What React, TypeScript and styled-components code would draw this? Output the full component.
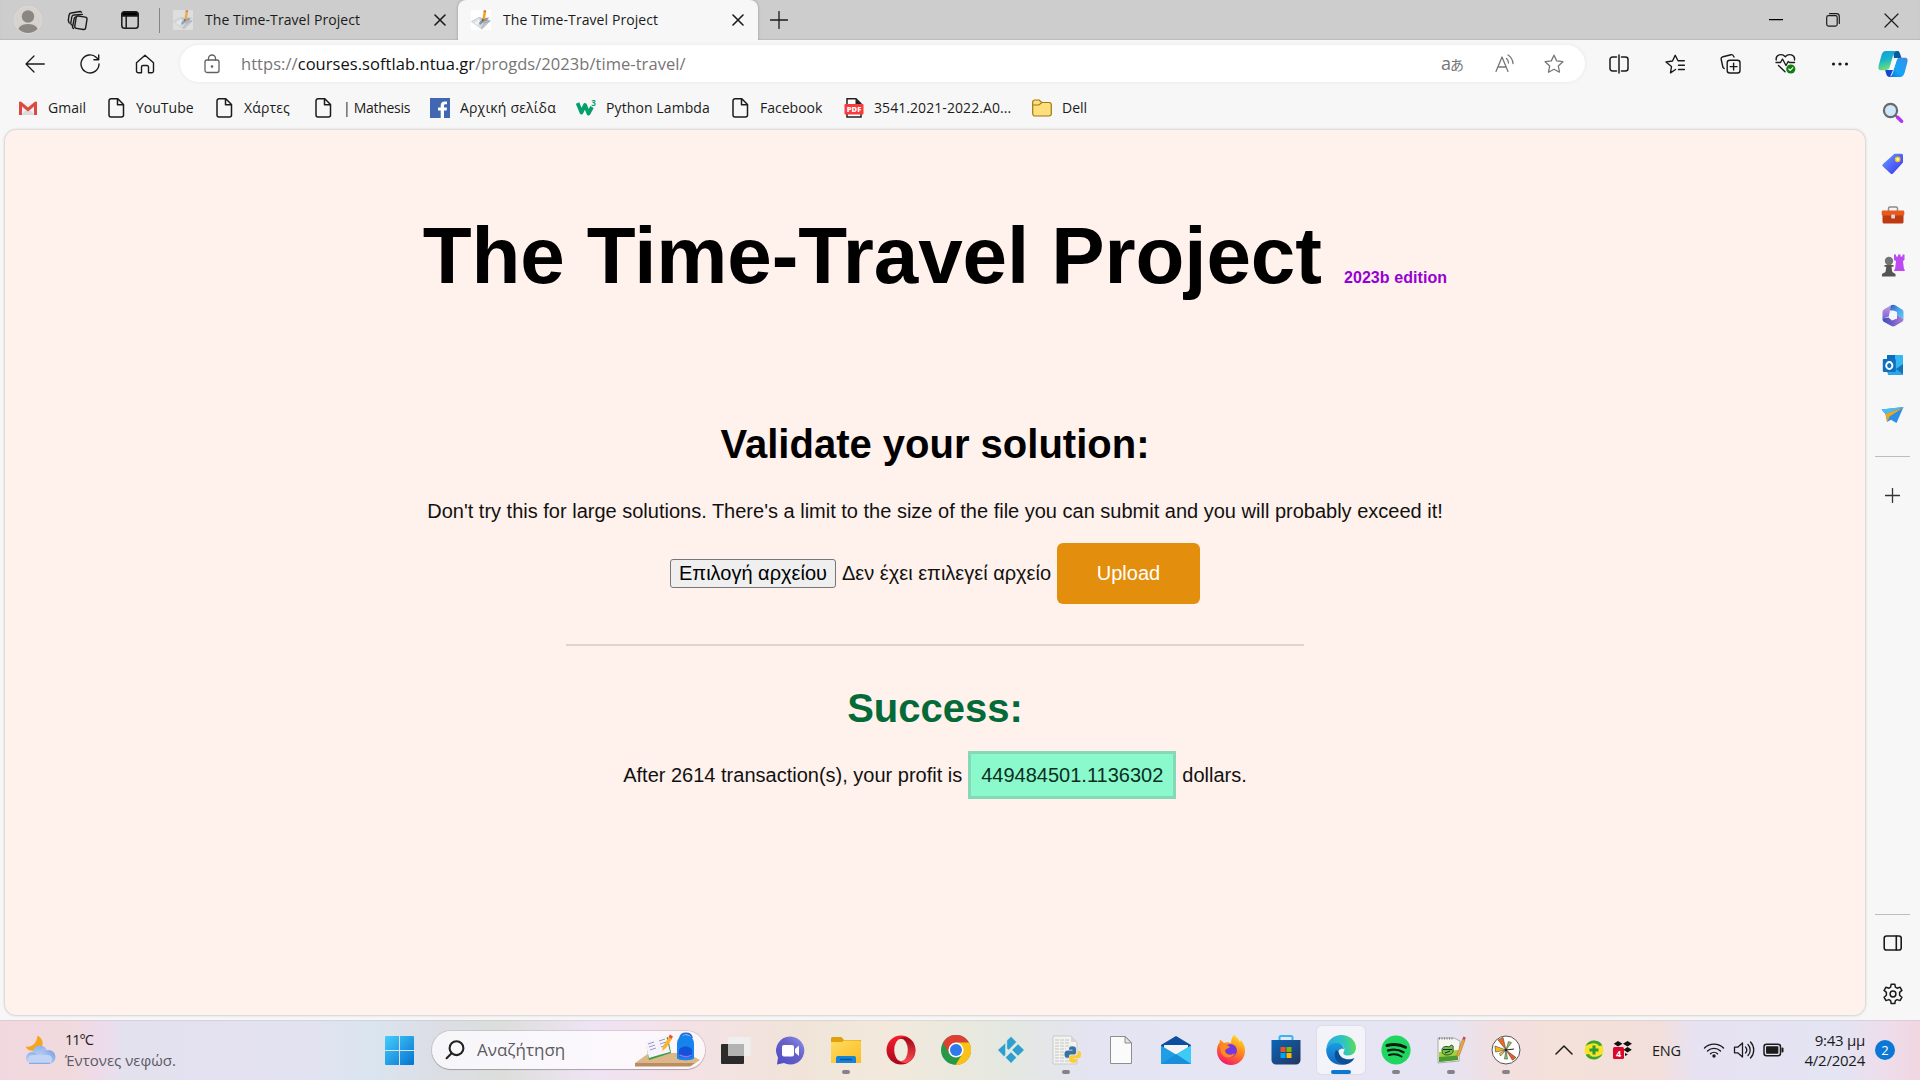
import React from 'react';
import styled, { createGlobalStyle } from 'styled-components';

const ui = `"Open Sans", "Noto Sans", sans-serif`;
const arial = `"Liberation Sans", Arial, sans-serif`;

const Global = createGlobalStyle`
  * { box-sizing: border-box; }
  html, body { margin: 0; padding: 0; overflow: hidden; }
  body { font-family: ${ui}; background: #f7f7f7; }
  svg { display: block; flex: none; }
`;

/* ---------- frame ---------- */
const Screen = styled.div`
  width: 1920px;
  height: 1080px;
  display: grid;
  grid-template-rows: 40px 980px 60px;
  background: #f7f7f7;
  overflow: hidden;
`;

const Tray = styled.div`
  display: flex;
  align-items: center;
  flex: none;
  margin-left: 22px;
`;

const IconBox = styled.span<{ $w: number; $ml?: number }>`
  flex: none;
  display: flex;
  align-items: center;
  justify-content: center;
  width: ${(p) => p.$w}px;
  margin-left: ${(p) => p.$ml ?? 0}px;
`;

/* ---------- tab strip ---------- */
const TabStrip = styled.header`
  display: flex;
  align-items: center;
  background: #cdcdcd;
  box-shadow: inset 0 -1px 1px #bcbcbc;
`;

const Avatar = styled.span`
  width: 28px;
  height: 28px;
  margin-left: 14px;
  border-radius: 50%;
  overflow: hidden;
  background: #d6d3cf;
  border: 1px solid #dedbd6;
`;

const StripDivider = styled.span`
  width: 1px;
  height: 25px;
  margin-left: 20px;
  background: #848484;
`;

const Tab = styled.div<{ $active?: boolean }>`
  display: flex;
  align-items: center;
  height: 40px;
  width: ${(p) => (p.$active ? 300 : 298)}px;
  padding-left: 13px;
  background: ${(p) => (p.$active ? '#f7f7f7' : 'transparent')};
  border-radius: 8px 8px 0 0;
  box-shadow: ${(p) => (p.$active ? '0 0 3px rgba(0,0,0,0.28)' : 'none')};
  clip-path: ${(p) => (p.$active ? 'inset(0 -4px 0 -4px)' : 'none')};
`;

const TabTitle = styled.span`
  width: 219px;
  margin-left: 12px;
  font-size: 14px;
  line-height: 20px;
  letter-spacing: 0.08px;
  color: #1b1b1b;
  white-space: nowrap;
`;

const Grow = styled.span`
  flex: 1;
`;

/* ---------- browser body ---------- */
const Body = styled.div`
  display: grid;
  grid-template-columns: 1865px 55px;
`;

const MainColumn = styled.div`
  display: grid;
  grid-template-rows: 48px 42px 885px;
  padding-left: 5px;
`;

const Toolbar = styled.nav`
  display: flex;
  align-items: center;
  padding-bottom: 1px;
`;

const AddressBar = styled.div`
  display: flex;
  align-items: center;
  width: 1405px;
  height: 37px;
  margin-left: 25px;
  border-radius: 19px;
  background: #fff;
  box-shadow: 0 0 4px rgba(0, 0, 0, 0.07);
`;

const Url = styled.span`
  width: 1200px;
  margin-left: 21px;
  font-size: 16.5px;
  line-height: 24px;
  letter-spacing: 0.05px;
  color: #767676;
  white-space: nowrap;
  b { font-weight: 400; color: #111; }
`;

const LangGlyph = styled.span`
  width: 24px;
  font: 18px/20px "Open Sans", "Noto Sans CJK JP", sans-serif;
  letter-spacing: -1px;
  color: #767676;
  white-space: nowrap;
  small { font-size: 14px; }
`;

const Bookmarks = styled.div`
  display: flex;
  align-items: center;
  padding: 0 0 3px 13px;
`;

const Bookmark = styled.a<{ $w: number; $ls?: number }>`
  display: flex;
  align-items: center;
  flex: none;
  gap: 10px;
  width: ${(p) => p.$w}px;
  font-size: 14px;
  line-height: 20px;
  letter-spacing: ${(p) => p.$ls ?? 0}px;
  color: #1b1b1b;
  white-space: nowrap;
`;

/* ---------- sidebar ---------- */
const Sidebar = styled.aside`
  display: flex;
  flex-direction: column;
  align-items: center;
`;

const SideItem = styled.span<{ $h?: number }>`
  display: flex;
  align-items: center;
  justify-content: center;
  width: 54px;
  height: ${(p) => p.$h ?? 50}px;
`;

const SideRule = styled.span`
  width: 35px;
  height: 1px;
  background: #bdbdbd;
`;

/* ---------- page ---------- */
const Page = styled.main`
  height: 885px;
  display: flex;
  flex-direction: column;
  align-items: center;
  background: #fff1ec;
  border-radius: 11px;
  box-shadow: 0 0 3px rgba(0, 0, 0, 0.3);
  font-family: ${arial};
  font-size: 20px;
  line-height: 23px;
  color: #111;
`;

const Title = styled.h1`
  margin: 80px 0 0;
  font-size: 80px;
  line-height: 92px;
  letter-spacing: -0.09px;
  color: #000;
  small { font-size: 16px; line-height: 1; letter-spacing: 0.08px; color: #9400d3; }
`;

const Heading = styled.h2<{ $top: number; $color?: string }>`
  margin: ${(p) => p.$top}px 0 0;
  font-size: 40px;
  line-height: 46px;
  color: ${(p) => p.$color ?? '#000'};
`;

const Para = styled.p`
  margin: 33px 0 0;
`;

const UploadForm = styled.form`
  display: flex;
  align-items: center;
  margin-top: 20px;
`;

const FileButton = styled.button`
  width: 166px;
  height: 29px;
  padding: 0;
  border: 1px solid #767676;
  border-radius: 3px;
  background: #efefef;
  font: 20px/23px ${arial};
  color: #000;
`;

const FileName = styled.span`
  width: 215px;
  margin-left: 6px;
  white-space: nowrap;
`;

const UploadButton = styled.button`
  width: 143px;
  height: 61px;
  border: 0;
  border-radius: 6px;
  background: #e38f0d;
  font: 20px/23px ${arial};
  color: #fff;
`;

const Rule = styled.hr`
  width: 738px;
  height: 2px;
  margin: 40px 0 0;
  border: 0;
  background: #dfd3cf;
`;

const Result = styled.div`
  display: flex;
  align-items: center;
  gap: 6px;
  margin-top: 20px;
`;

const Profit = styled.span`
  padding: 10px 10px 9px;
  border: 3px solid #86d9b8;
  background: #8afacd;
  color: #0b2e1f;
`;

/* ---------- taskbar ---------- */
const Taskbar = styled.footer`
  display: flex;
  align-items: center;
  border-top: 1px solid rgba(120, 110, 130, 0.14);
  padding-bottom: 1px;
  background: linear-gradient(90deg,
    #f1d8e0 0, #f0dadd 70px, #eedbea 98px, #e4e1ef 125px, #e3e2f0 300px,
    #dae5ef 370px, #dcdee6 430px, #dcdedb 500px, #efe4f4 595px, #f4e1e6 680px,
    #f0e4d9 800px, #f2e9dc 890px, #e4e8e1 1010px, #e4e4f2 1090px, #e6e5f4 1300px,
    #e6e4f2 1450px, #f2dfe0 1500px, #f4e1d9 1560px, #f2dfdc 1660px, #e7e2f2 1695px,
    #e4e4f3 1840px, #efdcea 1890px, #f0d7e1 1920px);
`;

const Weather = styled.div`
  width: 320px;
  margin-left: 8px;
  font-size: 15px;
  line-height: 20px;
  color: #5b5962;
  white-space: nowrap;
  strong { display: block; font-size: 14.5px; font-weight: 400; letter-spacing: -1px; color: #1a1a1a; }
`;

const SearchBox = styled.div`
  display: flex;
  align-items: center;
  width: 273px;
  height: 38px;
  margin-left: 18px;
  padding-left: 13px;
  overflow: hidden;
  border-radius: 19px;
  background: linear-gradient(90deg, #f6f6f9, #fbf8fd 55%, #fcf6f8);
  box-shadow: 0 0 0 1px rgba(90, 80, 100, 0.16), 0 1px 1px rgba(0, 0, 0, 0.22);
`;

const SearchText = styled.span`
  width: 158px;
  margin-left: 12px;
  font-size: 17px;
  line-height: 22px;
  color: #5d5b60;
`;

const Apps = styled.div`
  display: grid;
  grid-template-columns: repeat(15, 55px);
  margin-left: 3px;
`;

const AppSlot = styled.span<{ $active?: boolean }>`
  display: flex;
  position: relative;
  align-items: center;
  justify-content: center;
  justify-self: center;
  width: 48px;
  height: 48px;
  border-radius: 5px;
  background: ${(p) => (p.$active ? 'rgba(255,255,255,0.55)' : 'transparent')};
  box-shadow: ${(p) => (p.$active ? '0 0 0 1px rgba(0,0,0,0.04)' : 'none')};
`;

const Running = styled.i<{ $active?: boolean }>`
  position: absolute;
  bottom: 0;
  left: 50%;
  width: ${(p) => (p.$active ? 20 : 8)}px;
  height: 4px;
  border-radius: 2px;
  transform: translateX(-50%);
  background: ${(p) => (p.$active ? '#0a78d4' : '#858288')};
`;

const Lang = styled.span`
  width: 51px;
  margin-left: 19px;
  font-size: 14.5px;
  letter-spacing: -0.2px;
  color: #1b1b1b;
`;

const Clock = styled.div`
  width: 80px;
  font-size: 15px;
  line-height: 20px;
  letter-spacing: -0.25px;
  text-align: right;
  color: #1b1b1b;
  white-space: nowrap;
`;

const Badge = styled.span`
  display: flex;
  align-items: center;
  justify-content: center;
  width: 20px;
  height: 20px;
  margin-left: 10px;
  border-radius: 50%;
  background: #0a78d4;
  color: #fff;
  font-size: 13px;
`;

/* ---------- line icons ---------- */
type LineProps = { w: number; h: number; c?: string; s?: number; children: React.ReactNode };
const Line = ({ w, h, c = '#1b1b1b', s = 1.3, children }: LineProps) => (
  <svg width={w} height={h} viewBox={`0 0 ${w} ${h}`} fill="none" stroke={c} strokeWidth={s} strokeLinecap="round" strokeLinejoin="round">
    {children}
  </svg>
);

const Person = () => (
  <svg width="26" height="26" viewBox="0 0 26 26" fill="#8b8682">
    <circle cx="13" cy="9.500" r="6.200" />
    <path d="M2.500 26c0-6 4-9 10.500-9s10.500 3 10.500 9z" />
  </svg>
);
const Workspaces = () => (
  <Line w={22} h={21} s={1.4}>
    <rect x="8.500" y="6.500" width="11" height="12.500" rx="2" transform="rotate(9 14 12)" />
    <path d="M5.500 15.500 4.600 15a2 2 0 0 1-.8-2l1-6a2.300 2.300 0 0 1 2.200-2l8.500-.6M2.300 13l-.4-.8-.6-2 .8-5A2.300 2.300 0 0 1 4.200 3l9-1.500 1.300.6M6.500 18.500l-1-1 1.600-8.700A2 2 0 0 1 9 7" />
  </Line>
);
const TabActions = () => (
  <Line w={18} h={18} s={1.5}>
    <rect x=".8" y=".8" width="16.400" height="16.400" rx="2.800" />
    <path d="M1 3.500a2.500 2.500 0 0 1 2.500-2.500h11A2.500 2.500 0 0 1 17 3.500V5H1z" fill="#000" />
    <path d="M5.200 5v12" />
  </Line>
);
const Cross = ({ n = 10, s = 1.6 }: { n?: number; s?: number }) => (
  <Line w={n + 2} h={n + 2} s={s}>
    <path d={`M1 1 ${n + 1} ${n + 1}M${n + 1} 1 1 ${n + 1}`} />
  </Line>
);
const Plus = ({ n, c }: { n: number; c?: string }) => (
  <Line w={n} h={n} c={c} s={1.3}>
    <path d={`M${n / 2} .5V${n - 0.5}M.5 ${n / 2}H${n - 0.5}`} />
  </Line>
);
const PaperPencil = ({ faded }: { faded?: boolean }) => (
  <svg width="20" height="20" viewBox="0 0 20 20" opacity={faded ? 0.75 : 1}>
    <rect width="20" height="20" fill={faded ? '#e4e4e4' : '#fff'} />
    <path d="M0 11.500 8 7l12 3.500-9 9z" fill="#bcc1ca" />
    <path d="m.5 12 7.500-4.500 4 6-2.500 4.500z" fill="#dadfe6" />
    <path d="m3 12.500 5-3 2 3-4 2.500z" fill="#eef1f5" />
    <path d="M8 13c2-3 6-6 11-5-3 .5-3 1.500-2 2.500-3-.5-5 2-8 4.500z" fill="#8f959d" />
    <path d="M13 13c2-1 4-1 6-2" stroke="#a6abb3" fill="none" />
    <path d="m11.500 8.800 1-7L15 2l-.8 6-2.200 3z" fill="#f2a51c" />
    <path d="m12.500 1.800.2-1.600 2.500.3-.2 1.500z" fill="#d9542b" />
    <path d="m11.500 8.800-.2 2.700 1.600-1.700z" fill="#333" />
  </svg>
);

const Back = () => <Line w={20} h={18}><path d="M19.300 9H1M9 1 1 9l8 8" /></Line>;
const Reload = () => <Line w={20} h={20} s={1.4}><path d="M19 10a9 9 0 1 1-2.600-6.400L18.500 5.500M18.700 1v4.800h-4.800" /></Line>;
const Home = () => <Line w={20} h={20} s={1.4}><path d="M1.500 8.800 10 1.200l8.500 7.600V17a1.800 1.800 0 0 1-1.800 1.800h-3.200V13a1.500 1.500 0 0 0-1.500-1.500H8A1.500 1.500 0 0 0 6.500 13v5.800H3.300A1.800 1.800 0 0 1 1.500 17z" /></Line>;
const Lock = () => (
  <Line w={16} h={20} c="#616161">
    <rect x="1" y="6" width="14" height="12.500" rx="2" />
    <path d="M4.500 6V4.500a3.500 3.500 0 0 1 7 0V6" />
    <circle cx="8" cy="12.500" r=".7" fill="#616161" />
  </Line>
);
const ReadAloud = () => (
  <Line w={20} h={19} c="#767676">
    <path d="M1 17.500 7 3l6 14.500M3 13h8M11.500 4.500c1.500 1.300 2 2.800 2 4.500M13 1c3 2 4.800 5 5 8.500" />
  </Line>
);
const starPath = 'm10 1.200 2.700 5.700 6.200.8-4.600 4.300 1.200 6.200L10 15.200l-5.500 3 1.200-6.200L1.100 7.700l6.200-.8z';
const Star = () => <Line w={20} h={20} c="#767676"><path d={starPath} /></Line>;
const Split = () => <Line w={20} h={20} s={1.5}><path d="M10 1v18M7.500 3h-4A2.500 2.500 0 0 0 1 5.500v9A2.500 2.500 0 0 0 3.500 17h4M12.500 3h4A2.500 2.500 0 0 1 19 5.500v9a2.500 2.500 0 0 1-2.500 2.500h-4" /></Line>;
const Favorites = () => <Line w={20} h={20} s={1.4}><path d="M10.500 15.500 5.500 18.800 6.500 12.500 1 8l6.500-1L10.200 1.300 13 6.800h6.300M13.500 11.300h6M13.500 15.500h6" /></Line>;
const Collections = () => (
  <Line w={21} h={21} s={1.4}>
    <rect x="7.200" y="7.200" width="12.800" height="12.800" rx="2.500" />
    <path d="M13.600 10.200v6.800M10.200 13.600H17M4.200 15.500 3 14.500 1.200 6.500a2.300 2.300 0 0 1 1.800-2.800l8-2a2.300 2.300 0 0 1 2.500 1.300l.5 1" />
  </Line>
);
const Health = () => (
  <Line w={21} h={21} s={1.4}>
    <path d="M1.200 7C.5 1.500 7 0 10.300 3.700 13.500 0 20.300 1.500 19.500 7M1 9.500h4.500l2-3.500 3.500 6.500 2.200-4 1.300 1h5M3.500 12.500 10 18.800" />
    <circle cx="15.800" cy="16" r="4.600" fill="#117c10" stroke="none" />
    <path d="m13.800 16 1.400 1.400 2.700-2.800" stroke="#fff" strokeWidth="1.100" />
  </Line>
);
const Dots = () => <svg width="18" height="4" fill="#1b1b1b"><circle cx="2.500" cy="2" r="1.600" /><circle cx="9" cy="2" r="1.600" /><circle cx="15.500" cy="2" r="1.600" /></svg>;
const Copilot = () => (
  <svg width="30" height="28" viewBox="0 0 30 28">
    <defs>
      <linearGradient id="cpA" x1="0" y1="0" x2="0.300" y2="1"><stop offset="0" stopColor="#0f9ee0" /><stop offset=".5" stopColor="#19b3c9" /><stop offset="1" stopColor="#6fe07b" /></linearGradient>
      <linearGradient id="cpB" x1="1" y1="0" x2="0" y2="1"><stop offset="0" stopColor="#3c8be8" /><stop offset=".6" stopColor="#14a6f5" /><stop offset="1" stopColor="#0d6fe0" /></linearGradient>
    </defs>
    <path d="M15 1h4.500c2 0 2.300 2 3 4l1 3H16z" fill="#0b5a9c" />
    <path d="M7 20h8l-3 7c-2.500 0-3.500-1.500-4-4z" fill="#1746d1" />
    <path d="M8 1h11c-3 1-3.500 3-4.500 6.500L12 16c-.8 3-1.800 4.200-4.500 4.200H3c-3 0-3-2.500-2-6L3.500 5C4.500 2.500 5.500 1 8 1z" fill="url(#cpA)" />
    <path d="M22 27H11c3-1 3.500-3 4.500-6.500L18 12c.8-3 1.800-4.200 4.500-4.200H27c3 0 3 2.500 2 6L26.500 23c-1 2.500-2 4-4.500 4z" fill="url(#cpB)" />
    <path d="m16 9.500 3-.5-2.500 8-2 2.500-2.500.5 2-4z" fill="#f4fbff" />
  </svg>
);

/* ---------- bookmark icons ---------- */
const Gmail = () => (
  <svg width="20" height="20" viewBox="0 0 20 20">
    <path d="M3 5h14v12H3z" fill="#f1f1f1" /><path d="m3 17 7-7 7 7z" fill="#dcdcdc" />
    <path d="M1 4.500C1 3.500 2.500 3 3.500 4L10 9.500 16.500 4c1-1 2.500-.5 2.500.5V17h-3V8.500l-6 5-6-5V17H1z" fill="#de4a3f" />
  </svg>
);
const Doc = () => <Line w={20} h={20} s={1.5}><path d="M5 .8h6.800L17.500 6.500V17a2 2 0 0 1-2 2H5a2 2 0 0 1-2-2V2.800a2 2 0 0 1 2-2zM11.500 1v5.800h5.800" /></Line>;
const Fb = () => (
  <svg width="20" height="20" viewBox="0 0 20 20">
    <rect width="20" height="20" fill="#4267b2" />
    <path d="M14 20v-7.500h2.600l.4-3h-3V7.800c0-.9.300-1.500 1.600-1.500H17V3.600a20 20 0 0 0-2.400-.1c-2.300 0-3.900 1.400-3.900 4v2H8v3h2.700V20z" fill="#fff" />
  </svg>
);
const W3 = () => (
  <svg width="20" height="20" viewBox="0 0 20 20">
    <path d="m1.500 5 4 9.500L9 7l3.500 8.500L16 9" fill="none" stroke="#04a06b" strokeWidth="3.800" strokeLinejoin="round" />
    <text x="15.300" y="8" fontSize="8" fontWeight="700" fill="#04a06b">3</text>
  </svg>
);
const Pdf = () => (
  <svg width="20" height="20" viewBox="0 0 20 20">
    <path d="M3 .8h9l5 5V19H3z" fill="#fff" stroke="#222" strokeWidth="1.500" /><path d="M11.500 1v5h5.500z" fill="#222" />
    <rect x=".5" y="6" width="19" height="10.500" rx="1" fill="#fb3b3b" />
    <text x="10" y="14" fontSize="7.500" fontWeight="800" textAnchor="middle" fill="#fff">PDF</text>
  </svg>
);
const FolderMark = () => (
  <svg width="20" height="20" viewBox="0 0 20 20">
    <path d="M.7 4a2 2 0 0 1 2-2h4.500l2.500 2.500H17a2.300 2.300 0 0 1 2.300 2.300v9A2.300 2.300 0 0 1 17 18H3a2.300 2.300 0 0 1-2.300-2.300z" fill="#fddf7b" stroke="#a07713" strokeWidth="1.200" />
    <path d="M1 7h5.800l3-2.400" fill="none" stroke="#a07713" strokeWidth="1.200" />
  </svg>
);

/* ---------- sidebar icons ---------- */
const SideSearch = () => (
  <svg width="22" height="22" viewBox="0 0 22 22">
    <path d="m13 13 3 3" stroke="#666" strokeWidth="2" /><path d="m15.800 15.500 3.700 3.700" stroke="#b236f2" strokeWidth="3.600" strokeLinecap="round" />
    <circle cx="8.500" cy="8.500" r="6.600" fill="#cde8fb" stroke="#6a6a6a" strokeWidth="2.200" />
  </svg>
);
const Tag = () => (
  <svg width="22" height="22" viewBox="0 0 22 22">
    <defs><linearGradient id="tg" x1="0" y1="0" x2="1" y2="1"><stop offset="0" stopColor="#67a1ff" /><stop offset="1" stopColor="#3a2df0" /></linearGradient></defs>
    <path d="M12.500.8H19.500a1.500 1.500 0 0 1 1.500 1.500V9.500L11 20.500a1.800 1.800 0 0 1-2.500 0L1 13.500a1.800 1.800 0 0 1 0-2.500z" fill="url(#tg)" />
    <circle cx="15.700" cy="6.300" r="2.200" fill="#fff3b0" stroke="#f3c81c" strokeWidth="1.300" />
  </svg>
);
const Toolbox = () => (
  <svg width="24" height="20" viewBox="0 0 24 20">
    <path d="M7.500 6V3.500A1.500 1.500 0 0 1 9 2h6a1.500 1.500 0 0 1 1.500 1.500V6" fill="none" stroke="#8c8c8c" strokeWidth="1.500" />
    <rect x="1.500" y="9" width="21" height="9.500" rx="1.500" fill="#bd3a12" /><rect x=".7" y="5.500" width="22.600" height="5" rx="1.200" fill="#e8591c" />
    <rect x="10.200" y="9.500" width="3.800" height="4" rx=".8" fill="#d8d8d8" />
  </svg>
);
const Chess = () => (
  <svg width="24" height="24" viewBox="0 0 24 24">
    <path d="M13 1.500h2v2h2v-2h2.500v2h2v-2h2V7l-1.500 1 .8 7 1.200 3h-11l1.200-3 .8-7L13 7z" fill="#bb4bf1" />
    <circle cx="8" cy="8" r="4.200" fill="#757575" /><path d="M3.500 12h9v1.800h-2l.8 5.200 3.200 2v2.500H1V21l3.500-2 .8-5.200H3.500z" fill="#555" />
  </svg>
);
const M365 = () => (
  <svg width="22" height="23" viewBox="0 0 22 23">
    <defs>
      <linearGradient id="m1" x1="0" y1="0" x2="1" y2="1"><stop offset="0" stopColor="#3556b8" /><stop offset=".5" stopColor="#4aa5ea" /><stop offset="1" stopColor="#5cc8f7" /></linearGradient>
      <linearGradient id="m2" x1="0" y1="0" x2="0" y2="1"><stop offset="0" stopColor="#c09be8" /><stop offset="1" stopColor="#7c62cc" /></linearGradient>
      <linearGradient id="m3" x1="0" y1="0" x2="1" y2="0"><stop offset="0" stopColor="#3c4fc0" /><stop offset=".45" stopColor="#6c5cc8" /><stop offset="1" stopColor="#b07fd6" /></linearGradient>
    </defs>
    <path d="M9 1.300 2.200 5.200C1 6 .5 7 .5 8.200V15l7.200-3V7.500L13 4z" fill="url(#m2)" />
    <path d="M9 1.300c1.500-.8 3-.8 4.200 0l6.500 3.900c1.200.7 1.800 1.700 1.800 3V15l-6.500-4V8L8 7.300z" fill="url(#m1)" />
    <path d="M.5 14.500c0 1.800.5 2.800 1.700 3.500L9 21.800c1.500.8 3 .8 4.300 0l6.500-3.800c1.200-.7 1.700-1.700 1.700-3l-6.500-4v3.500l-5 2-3.500-3z" fill="url(#m3)" />
    <path d="m15 8-3.500-1.500h-4l1.800 3 3 5.500 2.700-.5z" fill="#f4f7ff" />
    <circle cx="11" cy="11.300" r="3.900" fill="#f4f7ff" />
  </svg>
);
const Outlook = () => (
  <svg width="22" height="22" viewBox="0 0 22 22">
    <rect x="5" y="1" width="16" height="18" rx="1" fill="#35b8f1" /><path d="M5 1h8v5H5z" fill="#0f6cbd" />
    <path d="m8 21 13-10v9a1 1 0 0 1-1 1z" fill="#1391dc" /><path d="M5 12h8l8 9H6z" fill="#2aa7e8" /><path d="m14 15 7-5v10z" fill="#1272b8" />
    <rect x=".8" y="5" width="13" height="13" rx="1" fill="#0f6fc2" /><ellipse cx="7.300" cy="11.500" rx="3.100" ry="3.500" fill="none" stroke="#fff" strokeWidth="1.900" />
  </svg>
);
const Plane = () => (
  <svg width="23" height="20" viewBox="0 0 23 20">
    <path d="M.5 4.500 22.500 2 15.500 18 10 14.800 6 17 4.500 9z" fill="#2a8fe8" /><path d="M.5 4.500 22.500 2 5 9z" fill="#49bdf5" />
    <path d="M4.500 9 22.500 2.500 8.500 11.500 6.500 17z" fill="#f6a416" />
  </svg>
);
const Panel = () => <Line w={20} h={18} s={1.6}><rect x="1.200" y="2" width="17" height="14" rx="2.300" /><path d="M13.300 2v14" /></Line>;
const Gear = () => (
  <Line w={22} h={22} s={1.5}>
    <circle cx="11" cy="11" r="2.900" />
    <path d="M9.200 1.200h3.600l.6 3 1.700 1 2.900-1 1.900 3.200-2.300 2v2.900l2.300 2-1.900 3.300-2.900-1-1.700 1-.6 3H9.200l-.6-3-1.700-1-2.900 1-1.900-3.300 2.300-2V9.400l-2.300-2L4 4.200l2.900 1 1.700-1z" />
  </Line>
);

/* ---------- taskbar icons ---------- */
const Moon = () => (
  <svg width="32" height="30" viewBox="0 0 32 30">
    <defs>
      <linearGradient id="cl" x1="0" y1="0" x2="0" y2="1"><stop offset="0" stopColor="#8fb2ec" /><stop offset="1" stopColor="#cbdaf4" /></linearGradient>
      <linearGradient id="cl2" x1="1" y1="0" x2="0" y2="1"><stop offset="0" stopColor="#6f9be4" /><stop offset="1" stopColor="#d5e2f7" /></linearGradient>
    </defs>
    <path d="M12.500.5c6 3 7 10 2 13.500S2 16 .8 11.500c6 1 11-3 11.700-11z" fill="#f3a61e" />
    <circle cx="15" cy="18" r="7.500" fill="url(#cl)" /><circle cx="23.500" cy="22" r="7" fill="url(#cl2)" /><circle cx="7" cy="23" r="6" fill="url(#cl)" />
    <rect x="3" y="20" width="24" height="9" rx="4.500" fill="#c2d4f3" /><path d="M4 28.300h21" stroke="#7d9fe0" />
  </svg>
);
const Windows = () => (
  <svg width="29" height="29" viewBox="0 0 29 29">
    <defs><linearGradient id="wn" x1="0" y1="0" x2="1" y2="1"><stop offset="0" stopColor="#45cdfb" /><stop offset="1" stopColor="#0573d0" /></linearGradient></defs>
    <path d="M1 0h13v14H0V1a1 1 0 0 1 1-1zm14 0h13a1 1 0 0 1 1 1v13H15zM0 15h14v14H1a1 1 0 0 1-1-1zm15 0h14v13a1 1 0 0 1-1 1H15z" fill="url(#wn)" />
  </svg>
);
const Magnifier = () => <Line w={20} h={20} s={2.1} c="#222"><circle cx="11.500" cy="8.200" r="6.900" /><path d="m6.600 13.200-5 5" /></Line>;
const SchoolArt = () => (
  <svg width="66" height="36" viewBox="0 0 66 36">
    <path d="M0 31 14 21h38l13 7-9 6H0z" fill="#dcb78a" /><path d="M0 31h60l-5 3.500H0z" fill="#b98d5f" />
    <path d="m11 12 22-7 3 16-22 7z" fill="#3d9b46" /><path d="m10 10 11-3 3 16-10 3zM21 7l10-4 4 17-11 3z" fill="#f6f3fb" />
    <path d="m13 12 6-2m-5 5 6-2m-5 5 6-2m3-7 6-2m-5 5 6-2m-5 5 6-2" stroke="#9b94c8" fill="none" />
    <path d="m27 19 1-5 6-9 3 2-6 9z" fill="#fcb52b" /><path d="m33.500 5 1.500-2.500 3 2L36.500 7z" fill="#e2523b" />
    <path d="M45 6c1-6 11-6 12 0" fill="none" stroke="#2370dc" strokeWidth="1.800" /><path d="M42 12c0-12 17-12 17 0v14c0 3-17 3-17 0z" fill="#1684ed" />
    <path d="M44 19c0-6 13-6 13 0v5c0 2-13 2-13 0z" fill="#1552d9" /><path d="M44.500 23c4 2 9 2 12 0" stroke="#8f6df5" fill="none" strokeWidth="1.500" />
  </svg>
);
const TaskView = () => (
  <svg width="30" height="28" viewBox="0 0 30 28">
    <rect y="8" width="23" height="20" rx="1" fill="#2b2b2b" /><rect x="7" y="1" width="22.500" height="19" rx="1" fill="#efefef" /><rect x="7" y="8" width="16" height="12" fill="#b3b3b3" />
  </svg>
);
const Chat = () => (
  <svg width="29" height="29" viewBox="0 0 29 29">
    <defs><linearGradient id="ch" x1="0" y1="1" x2="1" y2="0"><stop offset="0" stopColor="#4a4cc4" /><stop offset=".6" stopColor="#6b63c9" /><stop offset="1" stopColor="#8b97f2" /></linearGradient></defs>
    <path d="M14.500.5A14 14 0 1 1 8 27L1 28.500l1-7A14 14 0 0 1 14.500.5z" fill="url(#ch)" />
    <rect x="6" y="9" width="12" height="11.500" rx="2" fill="#fff" /><path d="m19 13 4-3.500v10.500l-4-3.500z" fill="#fff" />
  </svg>
);
const Explorer = () => (
  <svg width="30" height="28" viewBox="0 0 30 28">
    <defs><linearGradient id="ex" x1="0" y1="0" x2="1" y2="1"><stop offset="0" stopColor="#ffdc5e" /><stop offset="1" stopColor="#fbbc28" /></linearGradient></defs>
    <path d="M0 2.500A1.500 1.500 0 0 1 1.500 1h9L13 4h17v5H0z" fill="#e0a009" /><path d="M0 6h11l2-1.500h15.500A1.500 1.500 0 0 1 30 6v21H0z" fill="url(#ex)" />
    <path d="M5 27v-5a2 2 0 0 1 2-2h16a2 2 0 0 1 2 2v5z" fill="#1483d8" /><path d="M9 23.500h12" stroke="#0b5596" strokeWidth="1.500" />
  </svg>
);
const Opera = () => (
  <svg width="30" height="30" viewBox="0 0 30 30">
    <defs><linearGradient id="op" x1="0" y1="0" x2="0" y2="1"><stop offset="0" stopColor="#ff1b2d" /><stop offset="1" stopColor="#a3071b" /></linearGradient>
      <linearGradient id="op2" x1="0" y1="0" x2="0" y2="1"><stop offset="0" stopColor="#9c0817" /><stop offset="1" stopColor="#ff4b52" /></linearGradient></defs>
    <ellipse cx="15" cy="15" rx="14.500" ry="14.500" fill="url(#op)" /><path d="M11 6c4-5 9-4 12-2.500 8.500 6 8 18 0 23.500-3.500 1.500-8 1.500-12-3z" fill="url(#op2)" />
    <ellipse cx="15" cy="15" rx="6.800" ry="11.300" fill="#f1eadf" />
  </svg>
);
const Chrome = () => (
  <svg width="30" height="30" viewBox="0 0 30 30">
    <circle cx="15" cy="15" r="15" fill="#279847" />
    <path d="M2 7.500A15 15 0 0 1 28 7.500H15L8.500 18.800z" fill="#de3f31" />
    <path d="M28 7.500A15 15 0 0 1 14.500 30l7-11.500L15 7.500z" fill="#fbc116" />
    <circle cx="15" cy="15" r="7.600" fill="#fff" /><circle cx="15" cy="15" r="6" fill="#3079ec" />
  </svg>
);
const Kodi = () => (
  <svg width="28" height="28" viewBox="0 0 28 28">
    <path d="m14 .5 5.500 5.500-7.800 8-1.800-1.500V4.600zM8.500 7v12L7 20.500.8 14zM14 16l5.500 5.500L14 27.200 8.500 21.500zM21 8l6.200 6-6.200 6-6-6z" fill="#2f9fcd" stroke="#d9eef5" strokeWidth=".4" />
  </svg>
);
const Python = () => (
  <svg width="30" height="30" viewBox="0 0 30 30">
    <path d="M2 1h18l6 6v22H2z" fill="#f2f2f0" stroke="#c9c9c9" /><path d="M20 1v6h6z" fill="#d6d6d6" />
    <path d="M4 5h14M4 8h15M4 11h16M4 14h11M4 17h11M4 20h10M4 23h13M4 26h15" stroke="#c4c4c4" strokeDasharray="4 1" />
    <path d="M18 14c0-2 1-2.800 3.500-2.800S25 12 25 14v3.500c0 1.500-1 2-2 2h-3.500c-1 0-1.500.8-1.500 2v1.200c-4 .5-4.500-1-4.500-3.500s1-3.700 3.500-3.700h4.500v-.8H18z" fill="#3672a4" />
    <path d="M27.500 15.500c1.800.3 2.500 1.500 2.500 4s-1 3.800-3 3.800h-4.500v.8H26V25c0 2-1 2.800-3.800 2.800s-4-1-4-2.800v-2.500c0-1.500 1-2.300 2.300-2.300h4c1.500 0 2.300-.8 2.300-2z" fill="#fbcb38" />
  </svg>
);
const BlankFile = () => (
  <svg width="22" height="28" viewBox="0 0 22 28"><path d="M.5.500h15l6 6v21H.5z" fill="#fbfbfb" stroke="#8e8e8e" /><path d="M15 .5v6.500h6.500z" fill="#e4e4e4" stroke="#8e8e8e" /></svg>
);
const Mail = () => (
  <svg width="30" height="28" viewBox="0 0 30 28">
    <path d="M0 9 15 0l15 9v6H0z" fill="#0b4f9e" /><path d="M3 9h24v10H3z" fill="#f4f4f6" /><path d="M0 9.500 15 18.500 30 9.500V28H0z" fill="#1f9ee6" />
    <path d="m30 9.500-15 9L30 28z" fill="#3ccbf5" /><path d="m0 28 15-10 15 10z" fill="#198fdc" />
  </svg>
);
const Firefox = () => (
  <svg width="30" height="30" viewBox="0 0 30 30">
    <defs><linearGradient id="ff" x1=".8" y1="0" x2=".3" y2="1"><stop offset="0" stopColor="#ffe226" /><stop offset=".45" stopColor="#ff8a1c" /><stop offset="1" stopColor="#f5156c" /></linearGradient></defs>
    <path d="M18 0c4 3 5 5 6 7l1-2c3 4 4 7 4 11a14 14 0 1 1-28 0c0-4 1-7 2.500-8L4 4.500l4 3.500c2-1 5-1 7 0 0-3 1-6 3-8z" fill="url(#ff)" />
    <circle cx="14.500" cy="15.500" r="6.500" fill="#7438e0" /><path d="M4 10c4-1 8 0 10 2-2 2-4 1-5 4 1 4 6 5 10 2-2 6-12 6-14-1z" fill="#ff8b1a" />
  </svg>
);
const Store = () => (
  <svg width="30" height="30" viewBox="0 0 30 30">
    <defs><linearGradient id="st" x1="0" y1="0" x2="1" y2="1"><stop offset="0" stopColor="#0b66b8" /><stop offset="1" stopColor="#25345c" /></linearGradient></defs>
    <path d="M8.500 6V2.500A1.500 1.500 0 0 1 10 1h10a1.500 1.500 0 0 1 1.500 1.500V6" fill="none" stroke="#33b8f0" strokeWidth="2" />
    <path d="M.5 5h29v20a4.500 4.500 0 0 1-4.500 4.500H5A4.500 4.500 0 0 1 .5 25z" fill="url(#st)" />
    <path d="M9.500 12h5v5h-5z" fill="#f25022" /><path d="M15.500 12h5v5h-5z" fill="#7fba00" /><path d="M9.500 18h5v5h-5z" fill="#00a4ef" /><path d="M15.500 18h5v5h-5z" fill="#ffb900" />
  </svg>
);
const Edge = () => (
  <svg width="30" height="30" viewBox="0 0 30 30">
    <defs>
      <linearGradient id="e1" x1="0" y1=".5" x2="1" y2=".4"><stop offset="0" stopColor="#2aa9e6" /><stop offset=".6" stopColor="#2ec6c0" /><stop offset="1" stopColor="#5fdc53" /></linearGradient>
      <linearGradient id="e2" x1="0" y1="0" x2="0" y2="1"><stop offset="0" stopColor="#1b9de2" /><stop offset="1" stopColor="#1064c0" /></linearGradient>
    </defs>
    <path d="M.3 13C1.500 5 8 0 15 0c9 0 15 6 15 12.500 0 5-3.500 8-8 8-3.500 0-5.500-1.500-4.500-3 2-3 1-8.500-5.500-8.500C6 9 1.500 11 .3 13z" fill="url(#e1)" />
    <path d="M.2 14C1.500 10 6.500 7.500 11 8c4.500.5 7 3.500 7 6-4-1.500-7 2-6 6.500C13 25 17 29 20 29c-10 3.500-20.500-4-19.800-15z" fill="url(#e2)" />
    <path d="M10 15c-3.500 6 .5 14.500 9 14.500 4.500-.5 8-3.500 9.500-6.500-6 3-15 1-16-6.500z" fill="#0d4f94" />
  </svg>
);
const Spotify = () => (
  <svg width="30" height="30" viewBox="0 0 30 30" fill="none" stroke="#0b1a10" strokeLinecap="round">
    <circle cx="15" cy="15" r="14.600" fill="#1fd760" stroke="none" />
    <path d="M6 10.500c6.500-1.800 13.500-1 18.500 1.800" strokeWidth="3" /><path d="M7 15.500c5.500-1.500 11-.9 15.500 1.700" strokeWidth="2.400" /><path d="M8 20c4.500-1.200 9-.7 12.500 1.500" strokeWidth="2" />
  </svg>
);
const NotepadPP = () => (
  <svg width="30" height="30" viewBox="0 0 30 30">
    <path d="M2 3h16l6 3-1 20-21 2z" fill="#f6f7f3" stroke="#9a9a9a" strokeWidth=".8" />
    <path d="m3 17 19.500-2-.5 9.500L3 27z" fill="#a5cf3f" /><path d="m3 22 19-1.500v4.500L3 27z" fill="#4a9a2e" />
    <path d="M3 3.500h15" stroke="#777" strokeDasharray="1 1.500" strokeWidth="2" />
    <path d="M6 15c0-4 5-4 7-3 2-3 5-2 4 1 1 5-2 7-6 7-3 0-5-1-5-5z" fill="#73c04b" stroke="#275c1a" /><path d="M7 14.500h9M9 18l5-2" stroke="#222" />
    <path d="m20 23 1.500-5 5-14 2.500 1-5 14z" fill="#eca63b" stroke="#8a5a1b" strokeWidth=".4" /><path d="m26.500 4 .9-2.500 2.300 1L29 5z" fill="#c2474f" />
  </svg>
);
const Pinwheel = () => (
  <svg width="30" height="30" viewBox="0 0 30 30">
    <circle cx="15" cy="15" r="14" fill="#fff" stroke="#555" />
    <g stroke="#444" strokeWidth=".6"><path d="M15 15 7 5l5-2.500z" fill="#f26a1b" /><path d="m15 15-10.500 2-.5-6z" fill="#fbb814" /><path d="M15 15 17.500 6.500l3 1.200z" fill="#8ed149" />
      <path d="m15 15 10 7.500-3.500 2.700z" fill="#ee5e15" /><path d="m15 15 1.500 9h-3z" fill="#7fd06a" /><path d="m15 15-5.500 6-1-2.500z" fill="#fbd62b" /></g>
    <path d="m15 15 8-1" stroke="#222" /><circle cx="15" cy="15" r="1.300" fill="#222" />
  </svg>
);
const Chevron = () => <Line w={18} h={10} s={1.5}><path d="m1 9 8-8 8 8" /></Line>;
const Shield = () => (
  <svg width="20" height="20" viewBox="0 0 20 20">
    <circle cx="10" cy="10" r="9.500" fill="#f7e32a" />
    <path d="M1.500 6C4 1 9-.5 14 1.200c2 .8 3.500 2.300 4.300 4.300L15 6C13 2.500 8 2 1.500 6zM18.500 14c-2.500 5-7.500 6.500-12.500 4.800-2-.8-3.500-2.300-4.300-4.300L5 14c2 3.500 7 4 13.500 0z" fill="#3ba534" />
    <path d="M10 5.500v9M5.500 10h9" stroke="#2f9a2f" strokeWidth="3" />
  </svg>
);
const Dropbox = () => (
  <svg width="20" height="20" viewBox="0 0 20 20">
    <path d="m5 1 4.500 2.700L5 6.400.8 3.700zM14.500 1 19 3.700l-4.500 2.700L10 3.700zM14.500 7l4.300 2.700-4.300 2.700-4-2.700zM12 13l3 1.500-3 1.500z" fill="#111" />
    <rect y="7" width="11" height="12" rx="1.500" fill="#d9082c" /><text x="5.500" y="16.500" fontSize="9" fontWeight="700" textAnchor="middle" fill="#fff">4</text>
  </svg>
);
const Wifi = () => (
  <Line w={22} h={16} s={1.4}><path d="M1.500 6a13.500 13.500 0 0 1 19 0M4.500 9a9.300 9.300 0 0 1 13 0M7.500 11.800a5 5 0 0 1 7 0" /><circle cx="11" cy="14" r="1" fill="#1b1b1b" /></Line>
);
const Speaker = () => <Line w={22} h={18} s={1.3}><path d="M1.500 6.200h3.200L9.500 2v14l-4.800-4.200H1.500zM12.500 6a4.500 4.500 0 0 1 0 6M15 3.500a8 8 0 0 1 0 11M17.500 1a11.500 11.500 0 0 1 0 16" /></Line>;
const Battery = () => <Line w={22} h={14} s={1.5}><rect x="1" y="1.200" width="16.500" height="11.600" rx="2.500" /><rect x="3.800" y="4" width="10.800" height="6" fill="#1b1b1b" /><path d="M19.500 5.500v3" strokeWidth="2" /></Line>;

const bookmarks = [
  { icon: Gmail, label: 'Gmail', w: 88 },
  { icon: Doc, label: 'YouTube', w: 108 },
  { icon: Doc, label: 'Χάρτες', w: 99, ls: 0.15 },
  { icon: Doc, label: '| Mathesis', w: 117, ls: -0.3 },
  { icon: Fb, label: 'Αρχική σελίδα', w: 146, ls: 0.17 },
  { icon: W3, label: 'Python Lambda', w: 154, ls: 0.1 },
  { icon: Doc, label: 'Facebook', w: 114 },
  { icon: Pdf, label: '3541.2021-2022.A0...', w: 188, ls: 0.07 },
  { icon: FolderMark, label: 'Dell', w: 60 },
];

const apps = [
  { icon: TaskView }, { icon: Chat }, { icon: Explorer, run: true }, { icon: Opera }, { icon: Chrome },
  { icon: Kodi }, { icon: Python, run: true }, { icon: BlankFile }, { icon: Mail }, { icon: Firefox },
  { icon: Store }, { icon: Edge, run: true, active: true }, { icon: Spotify, run: true },
  { icon: NotepadPP, run: true }, { icon: Pinwheel, run: true },
];

export default function App() {
  return (
    <Screen>
      <Global />
      <TabStrip>
        <Avatar><Person /></Avatar>
        <IconBox $w={22} $ml={25}><Workspaces /></IconBox>
        <IconBox $w={18} $ml={32}><TabActions /></IconBox>
        <StripDivider />
        <Tab><PaperPencil faded /><TabTitle>The Time-Travel Project</TabTitle><IconBox $w={12} $ml={10}><Cross /></IconBox></Tab>
        <Tab $active><PaperPencil /><TabTitle>The Time-Travel Project</TabTitle><IconBox $w={12} $ml={10}><Cross /></IconBox></Tab>
        <IconBox $w={18} $ml={12}><Plus n={18} /></IconBox>
        <Grow />
        <IconBox $w={14}><Line w={14} h={2} c="#000"><path d="M.5 .5h13" /></Line></IconBox>
        <IconBox $w={14} $ml={43}>
          <Line w={14} h={14} s={1.2}><rect x=".7" y="2.600" width="10.500" height="10.500" rx="1.800" /><path d="M3.500 .7h7A2.800 2.800 0 0 1 13.300 3.500v7" /></Line>
        </IconBox>
        <IconBox $w={15} $ml={44}><Cross n={13} s={1.2} /></IconBox>
        <IconBox $w={21} />
      </TabStrip>

      <Body>
        <MainColumn>
          <Toolbar>
            <IconBox $w={20} $ml={20}><Back /></IconBox>
            <IconBox $w={20} $ml={35}><Reload /></IconBox>
            <IconBox $w={20} $ml={35}><Home /></IconBox>
            <AddressBar>
              <IconBox $w={16} $ml={24}><Lock /></IconBox>
              <Url>https://<b>courses.softlab.ntua.gr</b>/progds/2023b/time-travel/</Url>
              <LangGlyph>a<small>あ</small></LangGlyph>
              <IconBox $w={20} $ml={30}><ReadAloud /></IconBox>
              <IconBox $w={20} $ml={29}><Star /></IconBox>
            </AddressBar>
            <IconBox $w={20} $ml={24}><Split /></IconBox>
            <IconBox $w={20} $ml={36}><Favorites /></IconBox>
            <IconBox $w={21} $ml={35}><Collections /></IconBox>
            <IconBox $w={21} $ml={34}><Health /></IconBox>
            <IconBox $w={18} $ml={35}><Dots /></IconBox>
          </Toolbar>
          <Bookmarks>
            {bookmarks.map(({ icon: I, label, w, ls }) => (
              <Bookmark key={label} $w={w} $ls={ls}><I />{label}</Bookmark>
            ))}
          </Bookmarks>
          <Page>
            <Title>The Time-Travel Project <small>2023b edition</small></Title>
            <Heading $top={119}>Validate your solution:</Heading>
            <Para>Don't try this for large solutions. There's a limit to the size of the file you can submit and you will probably exceed it!</Para>
            <UploadForm>
              <FileButton type="button">Επιλογή αρχείου</FileButton>
              <FileName>Δεν έχει επιλεγεί αρχείο</FileName>
              <UploadButton type="button">Upload</UploadButton>
            </UploadForm>
            <Rule />
            <Heading $top={39} $color="#046a38">Success:</Heading>
            <Result>
              <span>After 2614 transaction(s), your profit is</span>
              <Profit>449484501.1136302</Profit>
              <span>dollars.</span>
            </Result>
          </Page>
        </MainColumn>
        <Sidebar>
          <SideItem $h={48}><Copilot /></SideItem>
          <SideItem><SideSearch /></SideItem>
          <SideItem $h={52}><Tag /></SideItem>
          <SideItem><Toolbox /></SideItem>
          <SideItem><Chess /></SideItem>
          <SideItem><M365 /></SideItem>
          <SideItem><Outlook /></SideItem>
          <SideItem><Plane /></SideItem>
          <SideItem $h={16} />
          <SideRule />
          <SideItem $h={77}><Plus n={15} c="#333" /></SideItem>
          <Grow />
          <SideRule />
          <SideItem $h={56}><Panel /></SideItem>
          <SideItem $h={45}><Gear /></SideItem>
          <SideItem $h={4} />
        </Sidebar>
      </Body>

      <Taskbar>
        <IconBox $w={32} $ml={25}><Moon /></IconBox>
        <Weather><strong>11°C</strong>Έντονες νεφώσ.</Weather>
        <Windows />
        <SearchBox>
          <Magnifier />
          <SearchText>Αναζήτηση</SearchText>
          <SchoolArt />
        </SearchBox>
        <Apps>
          {apps.map(({ icon: I, run, active }, i) => (
            <AppSlot key={i} $active={active}><I />{run && <Running $active={active} />}</AppSlot>
          ))}
        </Apps>
        <Tray>
          <Chevron />
          <IconBox $w={20} $ml={11}><Shield /></IconBox>
          <IconBox $w={20} $ml={9}><Dropbox /></IconBox>
          <Lang>ENG</Lang>
          <IconBox $w={22}><Wifi /></IconBox>
          <IconBox $w={22} $ml={8}><Speaker /></IconBox>
          <IconBox $w={22} $ml={8}><Battery /></IconBox>
          <Clock>9:43 μμ<br />4/2/2024</Clock>
          <Badge>2</Badge>
        </Tray>
      </Taskbar>
    </Screen>
  );
}
